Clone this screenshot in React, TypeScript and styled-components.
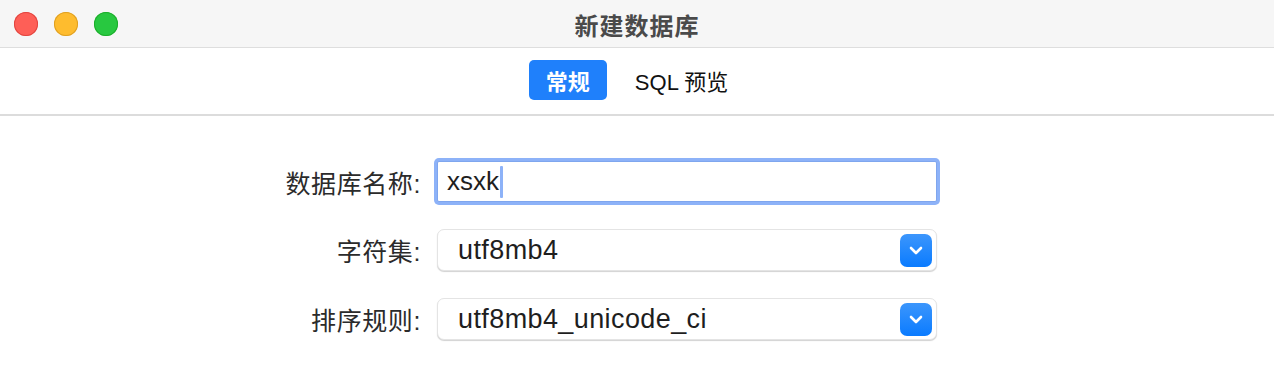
import { createGlobalStyle, styled } from "styled-components";

const GlobalStyle = createGlobalStyle`
  html, body {
    margin: 0;
    padding: 0;
    background: #fff;
  }
  body {
    font-family: "Liberation Sans", "Noto Sans CJK SC", sans-serif;
  }
`;

const Window = styled.div`
  width: 1274px;
  height: 392px;
  display: flex;
  flex-direction: column;
  background: #fff;
  overflow: hidden;
`;

const TitleBar = styled.div`
  height: 47px;
  display: flex;
  align-items: center;
  position: relative;
  background: #f6f6f6;
  border-bottom: 1px solid #dedede;
`;

const Lights = styled.div`
  display: flex;
  gap: 16px;
  padding-left: 14px;
  margin-top: 1px;
`;

const Light = styled.span<{ $color: string; $edge: string }>`
  width: 24px;
  height: 24px;
  border-radius: 50%;
  background: ${(p) => p.$color};
  box-shadow: inset 0 0 0 1px ${(p) => p.$edge};
`;

const Title = styled.div`
  position: absolute;
  left: 0;
  right: 0;
  text-align: center;
  font-size: 24px;
  font-weight: bold;
  color: #4a4a4a;
  letter-spacing: 1px;
  padding-top: 1px;
`;

const TabBar = styled.div`
  height: 66px;
  display: flex;
  align-items: center;
  justify-content: center;
  gap: 11px;
  border-bottom: 2px solid #dcdcdc;
`;

const Tab = styled.div<{ $active?: boolean }>`
  height: 40px;
  display: flex;
  align-items: center;
  padding: 0 17px;
  border-radius: 5px;
  font-size: 22px;
  color: ${(p) => (p.$active ? "#fff" : "#111")};
  background: ${(p) => (p.$active ? "#1f80fb" : "transparent")};
  font-weight: ${(p) => (p.$active ? "bold" : "normal")};
  margin-top: -2px;
`;

const Form = styled.div`
  display: grid;
  grid-template-columns: 421px 500px;
  column-gap: 16px;
  row-gap: 27px;
  align-items: center;
  padding-top: 45px;
`;

const Label = styled.div`
  text-align: right;
  font-size: 25px;
  letter-spacing: 0.6px;
  color: #2b2b2b;
`;

const TextField = styled.div`
  height: 41px;
  box-sizing: border-box;
  display: flex;
  align-items: center;
  padding-left: 9px;
  background: #fff;
  border: 1px solid #7fa6ee;
  border-radius: 2px;
  box-shadow: 0 0 0 3px #8db2f8;
  font-size: 26px;
  color: #1e1e1e;
`;

const Caret = styled.span`
  width: 3px;
  height: 32px;
  margin-left: 1px;
  border-radius: 1px;
  background: #8db2f8;
`;

const Select = styled.div`
  height: 42px;
  box-sizing: border-box;
  display: flex;
  align-items: center;
  justify-content: space-between;
  padding: 0 4px 0 20px;
  background: #fff;
  border: 1px solid #e4e4e4;
  border-radius: 7px;
  box-shadow: 0 1px 1px rgba(0, 0, 0, 0.18);
  font-size: 27px;
  letter-spacing: 0.4px;
  color: #1e1e1e;
`;

const Chevron = styled.span`
  width: 32px;
  height: 33px;
  display: flex;
  align-items: center;
  justify-content: center;
  border-radius: 7px;
  background: linear-gradient(#3c96fc, #0a7bff);
`;

function ChevronButton() {
  return (
    <Chevron>
      <svg width="14" height="9" viewBox="0 0 14 9">
        <path d="M2 2 L7 7 L12 2" fill="none" stroke="#fff" strokeWidth="2.6" strokeLinecap="round" strokeLinejoin="round" />
      </svg>
    </Chevron>
  );
}

export default function App() {
  return (
    <Window>
      <GlobalStyle />
      <TitleBar>
        <Lights>
          <Light $color="#fe5f57" $edge="#e14640" />
          <Light $color="#febc2e" $edge="#dfa023" />
          <Light $color="#28c840" $edge="#1dad2b" />
        </Lights>
        <Title>新建数据库</Title>
      </TitleBar>
      <TabBar>
        <Tab $active>常规</Tab>
        <Tab>SQL 预览</Tab>
      </TabBar>
      <Form>
        <Label>数据库名称:</Label>
        <TextField>
          xsxk
          <Caret />
        </TextField>
        <Label>字符集:</Label>
        <Select>
          utf8mb4
          <ChevronButton />
        </Select>
        <Label>排序规则:</Label>
        <Select>
          utf8mb4_unicode_ci
          <ChevronButton />
        </Select>
      </Form>
    </Window>
  );
}
